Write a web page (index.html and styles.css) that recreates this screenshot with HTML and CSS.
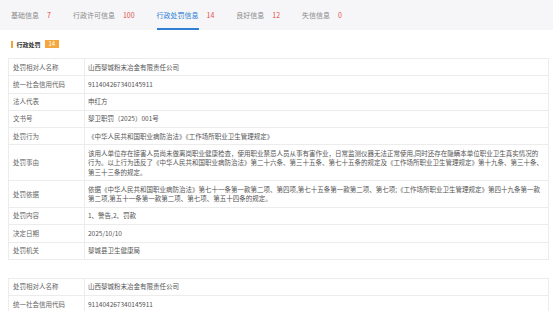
FILE: index.html
```html
<!DOCTYPE html>
<html lang="zh-CN">
<head>
    <meta charset="UTF-8">
    <meta name="viewport" content="width=device-width, initial-scale=1.0">
    <title>行政处罚信息</title>
    <link rel="stylesheet" href="styles.css">
</head>
<body>

<div class="tabs">
    <div class="tab"><span class="tab-name">基础信息</span><span class="tab-count">7</span></div>
    <div class="tab"><span class="tab-name">行政许可信息</span><span class="tab-count">100</span></div>
    <div class="tab active"><span class="tab-name">行政处罚信息</span><span class="tab-count">14</span></div>
    <div class="tab"><span class="tab-name">良好信息</span><span class="tab-count">12</span></div>
    <div class="tab"><span class="tab-name">失信信息</span><span class="tab-count">0</span></div>
</div>

<div class="section-title">
    <span class="bar"></span>
    <span class="title-text">行政处罚</span>
    <span class="badge">14</span>
</div>

<table class="info">
    <tr><td class="label">处罚相对人名称</td><td>山西黎城粉末冶金有限责任公司</td></tr>
    <tr><td class="label">统一社会信用代码</td><td>911404267340145911</td></tr>
    <tr><td class="label">法人代表</td><td>申红方</td></tr>
    <tr><td class="label">文书号</td><td>黎卫职罚（2025）001号</td></tr>
    <tr><td class="label">处罚行为</td><td>《中华人民共和国职业病防治法》《工作场所职业卫生管理规定》</td></tr>
    <tr><td class="label">处罚事由</td><td>
        <span class="line">该用人单位存在接害人员尚未做离岗职业健康检查，使用职业禁忌人员从事有害作业，日常监测仪器无法正常使用,同时还存在隐瞒本单位职业卫生真实情况的</span>
        <span class="line">行为。以上行为违反了《中华人民共和国职业病防治法》第二十六条、第三十五条、第七十五条的规定及《工作场所职业卫生管理规定》第十九条、第三十条、</span>
        <span class="line">第三十三条的规定。</span>
    </td></tr>
    <tr><td class="label">处罚依据</td><td>
        <span class="line">依据《中华人民共和国职业病防治法》第七十一条第一款第二项、第四项,第七十五条第一款第二项、第七项;《工作场所职业卫生管理规定》第四十九条第一款</span>
        <span class="line">第二项,第五十一条第一款第二项、第七项、第五十四条的规定。</span>
    </td></tr>
    <tr><td class="label">处罚内容</td><td>1、警告,2、罚款</td></tr>
    <tr><td class="label">决定日期</td><td>2025/10/10</td></tr>
    <tr><td class="label">处罚机关</td><td>黎城县卫生健康局</td></tr>
</table>

<table class="info">
    <tr><td class="label">处罚相对人名称</td><td>山西黎城粉末冶金有限责任公司</td></tr>
    <tr><td class="label">统一社会信用代码</td><td>911404267340145911</td></tr>
</table>

</body>
</html>
```

FILE: styles.css
```css
body {
    margin: 0;
    font-family: "Noto Sans CJK SC", "Noto Sans", sans-serif;
    background: #fff;
    color: #555;
}
.tabs {
    display: flex;
    height: 30px;
    padding-left: 11px;
    gap: 22px;
    background: #f6f6f8;
    font-size: 7px;
}
.tab {
    display: flex;
    gap: 8px;
}
.tab span {
    display: flex;
    align-items: center;
    border-bottom: 2px solid transparent;
    padding-top: 2px;
}
.tab-name {
    color: #8a8a8a;
}
.tab-count {
    color: #e2504c;
}
.tab.active .tab-name {
    color: #2f7fd4;
    border-bottom-color: #2f7fd4;
}
.section-title {
    display: flex;
    align-items: center;
    height: 28px;
    padding-left: 11px;
    gap: 4px;
}
.bar {
    width: 1.5px;
    height: 7px;
    background: #f2a33a;
}
.title-text {
    font-size: 6px;
    font-weight: bold;
    color: #333;
}
.badge {
    background: #f5a63d;
    color: #fff;
    font-size: 6px;
    line-height: 8px;
    padding: 0 4px;
}
.info {
    width: 541px;
    margin: 0 0 18px 8px;
    border-collapse: collapse;
    table-layout: fixed;
    font-size: 6.5px;
    line-height: 9.3px;
}
.info td {
    border: 1px solid #ececec;
    padding: 3.5px 2px 3.5px 3px;
    vertical-align: middle;
    color: #555;
}
.info td.label {
    width: 68px;
    padding-left: 4px;
    padding-right: 3px;
    color: #666;
}
.line {
    display: block;
    white-space: nowrap;
}
```
